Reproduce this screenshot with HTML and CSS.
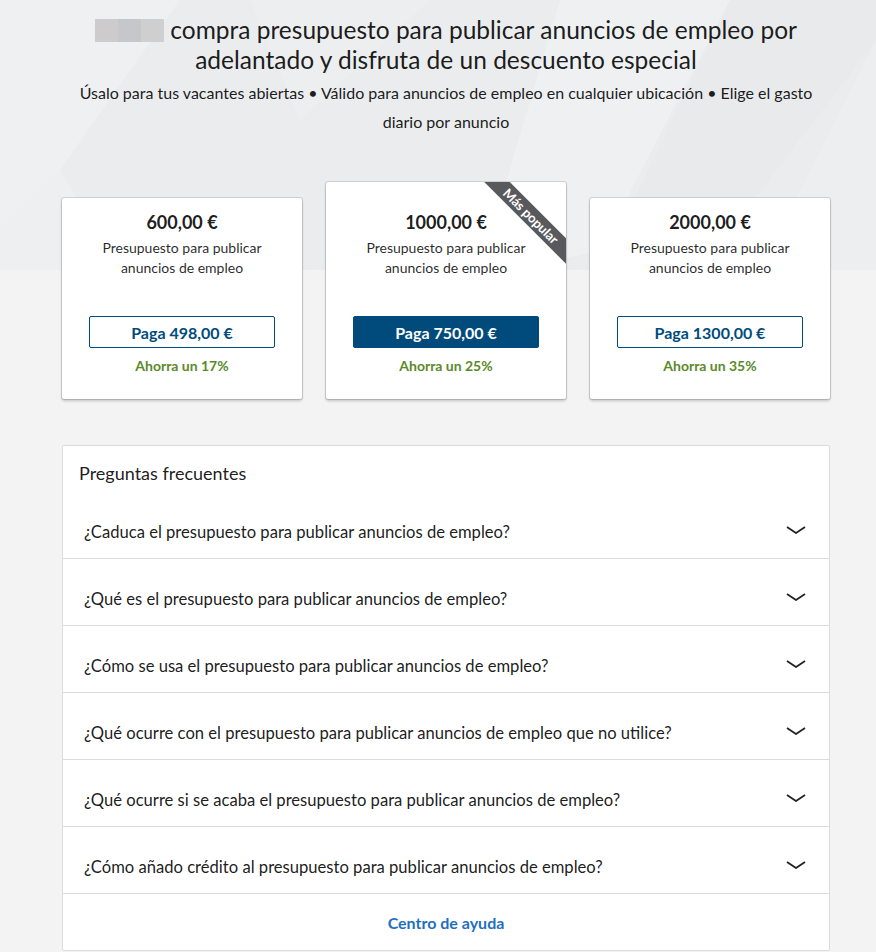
FILE: index.html
```html
<!DOCTYPE html>
<html lang="es">
<head>
<meta charset="utf-8">
<title>Presupuesto para anuncios de empleo</title>
<link rel="stylesheet" href="styles.css">
</head>
<body>
<div class="page">
  <svg class="hero-bg" width="876" height="270" viewBox="0 0 876 270" aria-hidden="true">
    <polygon points="0,0 180,0 60,170 0,230" fill="#eef0f1"/>
    <polygon points="0,230 60,170 120,270 0,270" fill="#edeff0"/>
    <polygon points="250,0 430,0 300,120" fill="#eceeef"/>
    <polygon points="560,0 730,0 600,250 520,270 480,270" fill="#eef0f1"/>
    <polygon points="730,0 876,0 876,40 700,270 600,270" fill="#e8eaeb"/>
    <polygon points="876,40 876,270 760,270" fill="#eceeef"/>
  </svg>
  <main class="wrap">
    <header class="intro">
      <h1 class="title"><span class="logo-blur" aria-hidden="true"><i></i><i></i><i></i></span> compra presupuesto para publicar anuncios de empleo por adelantado y disfruta de un descuento especial</h1>
      <p class="subtitle">Úsalo para tus vacantes abiertas • Válido para anuncios de empleo en cualquier ubicación • Elige el gasto diario por anuncio</p>
    </header>

    <section class="plans">
      <div class="plan">
        <div class="price">600,00 €</div>
        <div class="desc">Presupuesto para publicar anuncios de empleo</div>
        <button class="pay">Paga 498,00 €</button>
        <div class="save">Ahorra un 17%</div>
      </div>
      <div class="plan plan-popular">
        <div class="ribbon">Más popular</div>
        <div class="price">1000,00 €</div>
        <div class="desc">Presupuesto para publicar anuncios de empleo</div>
        <button class="pay pay-primary">Paga 750,00 €</button>
        <div class="save">Ahorra un 25%</div>
      </div>
      <div class="plan">
        <div class="price">2000,00 €</div>
        <div class="desc">Presupuesto para publicar anuncios de empleo</div>
        <button class="pay">Paga 1300,00 €</button>
        <div class="save">Ahorra un 35%</div>
      </div>
    </section>

    <section class="faq">
      <h2 class="faq-title">Preguntas frecuentes</h2>
      <div class="q"><span>¿Caduca el presupuesto para publicar anuncios de empleo?</span><svg class="chev" width="20" height="8" viewBox="0 0 20 8"><path d="M1 1 L10 7 L19 1" fill="none" stroke="#222" stroke-width="1.8"/></svg></div>
      <div class="q"><span>¿Qué es el presupuesto para publicar anuncios de empleo?</span><svg class="chev" width="20" height="8" viewBox="0 0 20 8"><path d="M1 1 L10 7 L19 1" fill="none" stroke="#222" stroke-width="1.8"/></svg></div>
      <div class="q"><span>¿Cómo se usa el presupuesto para publicar anuncios de empleo?</span><svg class="chev" width="20" height="8" viewBox="0 0 20 8"><path d="M1 1 L10 7 L19 1" fill="none" stroke="#222" stroke-width="1.8"/></svg></div>
      <div class="q"><span>¿Qué ocurre con el presupuesto para publicar anuncios de empleo que no utilice?</span><svg class="chev" width="20" height="8" viewBox="0 0 20 8"><path d="M1 1 L10 7 L19 1" fill="none" stroke="#222" stroke-width="1.8"/></svg></div>
      <div class="q"><span>¿Qué ocurre si se acaba el presupuesto para publicar anuncios de empleo?</span><svg class="chev" width="20" height="8" viewBox="0 0 20 8"><path d="M1 1 L10 7 L19 1" fill="none" stroke="#222" stroke-width="1.8"/></svg></div>
      <div class="q"><span>¿Cómo añado crédito al presupuesto para publicar anuncios de empleo?</span><svg class="chev" width="20" height="8" viewBox="0 0 20 8"><path d="M1 1 L10 7 L19 1" fill="none" stroke="#222" stroke-width="1.8"/></svg></div>
      <div class="faq-foot"><a class="help" href="#">Centro de ayuda</a></div>
    </section>
  </main>
</div>
</body>
</html>
```
FILE: styles.css
```css
* { box-sizing: border-box; }
html, body { margin: 0; padding: 0; }
body {
  font-family: Lato, "Noto Sans", "Liberation Sans", sans-serif;
  color: rgba(0,0,0,0.9);
  background: #f3f3f3;
}
.page {
  position: relative;
  background: linear-gradient(#eaeced 0, #eaeced 270px, #f3f3f3 270px);
  min-height: 952px;
  overflow: hidden;
}
.hero-bg {
  position: absolute;
  left: 0;
  top: 0;
  z-index: 0;
}
.wrap {
  position: relative;
  z-index: 1;
  width: 768px;
  margin-left: 62px;
  padding-bottom: 2px;
}
.intro {
  text-align: center;
  padding-top: 15px;
}
.title {
  margin: 0;
  font-size: 24.5px;
  line-height: 30px;
  font-weight: 400;
  color: rgba(0,0,0,0.9);
}
.logo-blur {
  display: inline-flex;
  vertical-align: -3px;
  width: 69px;
  height: 23px;
}
.logo-blur i { flex: 1; background: #cdcbcb; }
.logo-blur i:nth-child(2) { background: #c5c7ca; }
.logo-blur i:nth-child(3) { background: #cfcfcf; }
.subtitle {
  margin: 3px 0 0;
  font-size: 16px;
  line-height: 29px;
  color: rgba(0,0,0,0.9);
}
.plans {
  display: flex;
  align-items: flex-end;
  gap: 24px;
  margin-top: 46px;
}
.plan {
  position: relative;
  overflow: hidden;
  width: 240px;
  background: #fff;
  border-radius: 2px;
  box-shadow: 0 0 0 1px rgba(0,0,0,0.12), 0 2px 3px rgba(0,0,0,0.2);
  text-align: center;
  padding: 12px 27px 23px;
}
.plan-popular { padding-top: 28px; }
.price {
  font-size: 18px;
  line-height: 24px;
  font-weight: 700;
  color: rgba(0,0,0,0.9);
}
.desc {
  margin-top: 4px;
  font-size: 14px;
  line-height: 20px;
  color: rgba(0,0,0,0.85);
  min-height: 40px;
}
.pay {
  display: block;
  width: 100%;
  height: 32px;
  margin-top: 38px;
  border: 1px solid #004b7c;
  border-radius: 2px;
  background: #fff;
  color: #004b7c;
  font-family: inherit;
  font-size: 16px;
  font-weight: 700;
  cursor: pointer;
}
.pay-primary {
  background: #004b7c;
  color: #fff;
}
.save {
  margin-top: 8px;
  font-size: 14px;
  line-height: 20px;
  font-weight: 700;
  color: #5a8a2a;
}
.ribbon {
  position: absolute;
  left: 130px;
  top: 25px;
  width: 150px;
  height: 18px;
  line-height: 18px;
  transform: rotate(45deg);
  background: #58595c;
  color: #fff;
  font-size: 13px;
  font-weight: 700;
  text-align: center;
}
.faq {
  margin-top: 46px;
  background: #fff;
  border: 1px solid #dcdcdc;
  border-radius: 2px;
}
.faq-title {
  margin: 0;
  padding: 15px 16px 7px;
  font-size: 18px;
  line-height: 24px;
  font-weight: 400;
  color: rgba(0,0,0,0.9);
}
.q {
  display: flex;
  align-items: center;
  justify-content: space-between;
  height: 67px;
  padding: 13px 23px 0 21px;
  border-bottom: 1px solid #dcdcdc;
  font-size: 16.6px;
  font-weight: 400;
  color: rgba(0,0,0,0.9);
}
.chev { flex: none; margin-top: -4px; }
.faq-foot {
  height: 56px;
  display: flex;
  align-items: center;
  justify-content: center;
}
.help {
  color: #1f6fc0;
  text-decoration: none;
  font-size: 16px;
  font-weight: 700;
}
```
